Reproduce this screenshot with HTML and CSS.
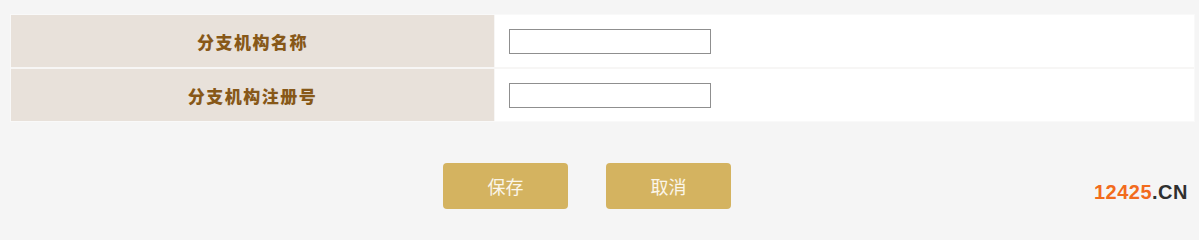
FILE: index.html
```html
<!DOCTYPE html>
<html lang="zh-CN">
<head>
<meta charset="utf-8">
<title>分支机构</title>
<link rel="stylesheet" href="styles.css">
</head>
<body>
<div class="page">
  <div class="form">
    <div class="label">分支机构名称</div>
    <div class="field"><input class="text-input" type="text"></div>
    <div class="label">分支机构注册号</div>
    <div class="field"><input class="text-input" type="text"></div>
  </div>
  <div class="actions">
    <button class="btn" type="button">保存</button>
    <button class="btn" type="button">取消</button>
  </div>
  <div class="watermark"><span class="wm-num">12425</span><span class="wm-cn">.CN</span></div>
</div>
</body>
</html>
```
FILE: styles.css
```css
html, body {
  margin: 0;
  padding: 0;
  background: #f5f5f5;
  height: 214px;
  overflow: hidden;
}
.page {
  position: relative;
  width: 1199px;
  height: 214px;
  padding-top: 15px;
  box-sizing: border-box;
  font-family: "Noto Sans CJK SC", "Noto Sans", sans-serif;
}
.form {
  margin: 0 5px 0 11px;
  display: grid;
  grid-template-columns: 483px 1fr;
  grid-auto-rows: 52px;
  column-gap: 1px;
  row-gap: 2px;
  background: #f7f6f5;
  box-shadow: 0 0 0 1px #f9f9f9;
}
.label {
  background: #e8e1da;
  display: flex;
  align-items: center;
  justify-content: center;
  color: #875818;
  font-weight: 900;
  font-size: 17px;
  letter-spacing: 1.5px;
}
.field {
  background: #ffffff;
  display: flex;
  align-items: center;
  padding-left: 14px;
}
.text-input {
  width: 202px;
  height: 25px;
  box-sizing: border-box;
  border: 1px solid #8f8f8f;
  margin: 0;
  padding: 0 4px;
  background: #fff;
}
.actions {
  margin-top: 42px;
  display: flex;
  justify-content: center;
  gap: 38px;
  padding-right: 25px;
}
.btn {
  width: 125px;
  height: 46px;
  border: none;
  border-radius: 4px;
  background: #d4b360;
  color: #fbf6ea;
  font-family: "Noto Sans CJK SC", "Noto Sans", sans-serif;
  font-size: 18px;
  padding: 0;
}
.watermark {
  position: absolute;
  right: 11px;
  top: 182px;
  font-family: "Liberation Sans", Arial, sans-serif;
  font-weight: bold;
  font-size: 20px;
  line-height: 1;
  letter-spacing: 0.5px;
}
.wm-num { color: #f26b1d; }
.wm-cn { color: #2f2f2f; }
```
